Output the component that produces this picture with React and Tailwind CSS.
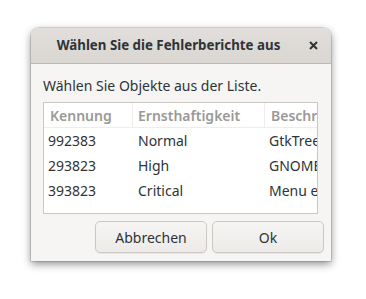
const rows = [
  { id: '992383', sev: 'Normal', desc: 'GtkTreeView crash' },
  { id: '293823', sev: 'High', desc: 'GNOME Shell' },
  { id: '393823', sev: 'Critical', desc: 'Menu editor' },
]

function Cell({ w, className, children }) {
  return (
    <div className={`shrink-0 overflow-hidden whitespace-nowrap ${w} ${className}`}>{children}</div>
  )
}

export default function App() {
  return (
    <div className="w-[366px] h-[299px] bg-white pt-[28px] pl-[31px] font-['Noto_Sans',sans-serif] text-[#2e3436]">
      <div className="w-[300px] h-[233px] flex flex-col rounded-t-[8px] bg-[#f6f5f4] shadow-[0_3px_9px_rgba(0,0,0,0.45),0_0_0_1px_rgba(0,0,0,0.12)] overflow-hidden">
        <div className="h-[36px] shrink-0 flex items-center bg-gradient-to-b from-[#e1dedb] to-[#dad6d2] border-b border-[#bfb8b1]">
          <div className="flex-1 text-center text-[13.3px] font-bold pl-[11px]">Wählen Sie die Fehlerberichte aus</div>
          <div className="w-[36px] flex items-center justify-center">
            <svg width="9" height="9" viewBox="0 0 9 9" className="text-[#2e3436]">
              <path d="M1 1L8 8M8 1L1 8" stroke="currentColor" strokeWidth="2" />
            </svg>
          </div>
        </div>
        <div className="flex-1 flex flex-col px-[12px]">
          <div className="pt-[12px] h-[38px] text-[14px] leading-[20px]">Wählen Sie Objekte aus der Liste.</div>
          <div className="h-[112px] bg-white border border-[#cdc7c2] overflow-hidden text-[14px] w-[275px]">
            <div className="h-[25px] flex items-center border-b border-[#efedeb] text-[#9a9996] font-semibold">
              <Cell w="w-[89px]" className="pl-[6px] h-full flex items-center border-r border-[#efedeb]">Kennung</Cell>
              <Cell w="w-[132px]" className="pl-[5px] h-full flex items-center border-r border-[#efedeb]">Ernsthaftigkeit</Cell>
              <Cell w="w-[60px]" className="pl-[6px] h-full flex items-center">Beschreibung</Cell>
            </div>
            {rows.map((r) => (
              <div key={r.id} className="h-[25px] flex items-center">
                <Cell w="w-[89px]" className="pl-[4px]">{r.id}</Cell>
                <Cell w="w-[132px]" className="pl-[5px]">{r.sev}</Cell>
                <Cell w="w-[60px]" className="pl-[4px]">{r.desc}</Cell>
              </div>
            ))}
          </div>
          <div className="flex justify-end gap-[5px] mt-[7px] -mr-[5px]">
            {['Abbrechen', 'Ok'].map((t) => (
              <button key={t} className="w-[112px] h-[32px] rounded-[5px] border border-[#cdc7c2] bg-gradient-to-b from-[#f6f5f4] to-[#edebe9] text-[14px] text-[#2e3436] shadow-[0_1px_0_rgba(0,0,0,0.05)]">
                {t}
              </button>
            ))}
          </div>
        </div>
      </div>
    </div>
  )
}
